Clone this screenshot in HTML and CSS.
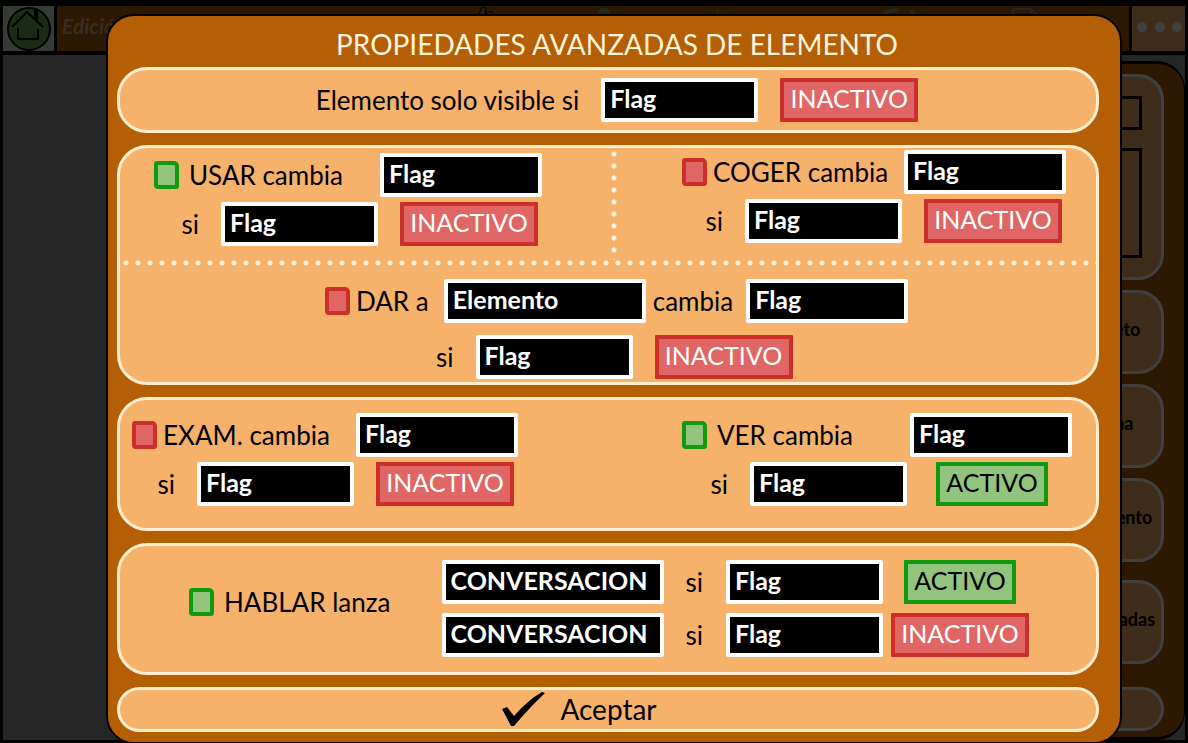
FILE: index.html
```html
<!DOCTYPE html>
<html lang="es">
<head>
  <meta charset="utf-8">
  <title>Propiedades avanzadas de elemento</title>
  <link rel="stylesheet" href="styles.css">
</head>
<body>
  <div class="app">
    <header class="topbar">
      <button class="home" aria-label="Inicio">
        <svg width="44" height="44" viewBox="0 0 44 44" fill="none" stroke="#000" stroke-width="2">
          <circle cx="22" cy="22" r="21" fill="#70ac58"/>
          <path d="M5 20 L20 5 L36 20 M28 12 V4 H30 V14 M11 21 V32 H31 V22"/>
        </svg>
      </button>
      <h2>Edición</h2>
      <nav class="tools">
        <svg width="26" height="26" viewBox="0 0 26 26" fill="#888" stroke="#000"><path d="M5 24 V8 L8 1 L12 2 L11 8 L17 5 L19 10 V24 Z"/></svg>
        <svg width="26" height="26" viewBox="0 0 26 26" fill="#999"><circle cx="13" cy="9" r="7"/><path d="M2 26 Q13 12 24 26 Z"/></svg>
        <svg width="80" height="26" viewBox="0 0 80 26" fill="none" stroke="#888" stroke-width="2"><path d="M0 6 L4 20 M10 3 L6 20 M20 6 L8 20"/></svg>
        <svg width="40" height="26" viewBox="0 0 40 26" fill="none" stroke="#999" stroke-width="4"><path d="M2 12 Q6 4 20 4 M32 5 L36 9"/></svg>
        <svg width="30" height="26" viewBox="0 0 30 26" fill="none" stroke="#999" stroke-width="2"><path d="M3 24 V3 H21 L27 9 V24 Z M21 3 V9"/></svg>
      </nav>
      <button class="more" aria-label="Más opciones"><i></i><i></i><i></i></button>
    </header>
    <aside class="sidebar">
      <div class="card card-form">
        <input type="text" aria-label="Nombre">
        <textarea aria-label="Descripción"></textarea>
      </div>
      <button class="card">Nuevo objeto</button>
      <button class="card">Añadir zona</button>
      <button class="card">Nuevo elemento</button>
      <button class="card card-rules">Reglas avanzadas</button>
      <button class="card card-last" aria-label="Cerrar"></button>
    </aside>
  </div>

  <div class="overlay">
    <form class="dialog" role="dialog" aria-labelledby="title">
      <h1 id="title">PROPIEDADES AVANZADAS DE ELEMENTO</h1>

      <section class="panel visible">
        <label for="visible">Elemento solo visible si</label>
        <input class="field" id="visible" type="text" value="Flag">
        <button type="button" class="toggle">INACTIVO</button>
      </section>

      <section class="panel verbs">
        <div class="cell cell-usar">
          <div class="action">
            <div class="row change">
              <label class="wide"><input type="checkbox" checked>USAR cambia</label>
              <input class="field target" type="text" value="Flag" aria-label="Flag que cambia USAR">
            </div>
            <div class="row cond">
              <label for="usar">si</label>
              <input class="field" id="usar" type="text" value="Flag">
              <button type="button" class="toggle">INACTIVO</button>
            </div>
          </div>
        </div>
        <div class="cell cell-coger">
          <div class="action">
            <div class="row change">
              <label><input type="checkbox">COGER cambia</label>
              <input class="field target" type="text" value="Flag" aria-label="Flag que cambia COGER">
            </div>
            <div class="row cond">
              <label for="coger">si</label>
              <input class="field" id="coger" type="text" value="Flag">
              <button type="button" class="toggle">INACTIVO</button>
            </div>
          </div>
        </div>
        <div class="cell cell-dar">
          <div class="row give">
            <label><input type="checkbox">DAR a</label>
            <input class="field element" type="text" value="Elemento" aria-label="Elemento">
            <label for="dar-flag">cambia</label>
            <input class="field target" id="dar-flag" type="text" value="Flag">
          </div>
          <div class="row give-cond">
            <label for="dar">si</label>
            <input class="field" id="dar" type="text" value="Flag">
            <button type="button" class="toggle">INACTIVO</button>
          </div>
        </div>
      </section>

      <section class="panel looks">
        <div class="action">
          <div class="row change">
            <label><input type="checkbox">EXAM. cambia</label>
            <input class="field target" type="text" value="Flag" aria-label="Flag que cambia EXAM.">
          </div>
          <div class="row cond">
            <label for="exam">si</label>
            <input class="field" id="exam" type="text" value="Flag">
            <button type="button" class="toggle">INACTIVO</button>
          </div>
        </div>
        <div class="action">
          <div class="row change">
            <label class="wide"><input type="checkbox" checked>VER cambia</label>
            <input class="field target" type="text" value="Flag" aria-label="Flag que cambia VER">
          </div>
          <div class="row cond cond-on">
            <label for="ver">si</label>
            <input class="field" id="ver" type="text" value="Flag">
            <button type="button" class="toggle on">ACTIVO</button>
          </div>
        </div>
      </section>

      <section class="panel talk">
        <label class="wide"><input type="checkbox" checked>HABLAR lanza</label>
        <div class="talks">
          <input class="field conversation" type="text" value="CONVERSACION" aria-label="Primera conversación">
          <label for="talk-1">si</label>
          <input class="field" id="talk-1" type="text" value="Flag">
          <button type="button" class="toggle on">ACTIVO</button>
          <input class="field conversation" type="text" value="CONVERSACION" aria-label="Segunda conversación">
          <label for="talk-2">si</label>
          <input class="field" id="talk-2" type="text" value="Flag">
          <button type="button" class="toggle">INACTIVO</button>
        </div>
      </section>

      <button type="submit" class="panel accept">
        <svg width="44" height="36" viewBox="0 0 44 36"><path d="M0 18 L5 16 L12 25 Q26 9 40 1 L43 2 Q28 16 12 35 L9 35 Z"/></svg>
        Aceptar
      </button>
    </form>
  </div>
</body>
</html>
```

FILE: styles.css
```css
* {
  box-sizing: border-box;
}
body {
  margin: 0;
  background: #999;
  font-family: Lato, sans-serif;
  font-size: 26px;
  line-height: 28px;
  color: #000;
  overflow: hidden;
}
button, input, textarea {
  font: inherit;
  color: inherit;
  margin: 0;
}

/* editor behind the dialog */
.app {
  display: flex;
  flex-direction: column;
  height: 100vh;
  border: 3px solid #000;
  border-top-width: 6px;
}
.topbar {
  display: flex;
  align-items: stretch;
  height: 49px;
  flex: none;
  background: #b45f06;
  border-bottom: 4px solid #000;
}
.home {
  width: 54px;
  padding: 0;
  border: 0;
  border-right: 3px solid #000;
  background: #d9ead3;
}
.home svg {
  display: block;
  margin: auto;
}
.topbar h2 {
  width: 80px;
  margin: 0;
  padding: 6px 5px;
  font-size: 21px;
  font-style: italic;
  color: #d8b48c;
}
.tools {
  flex: 1;
  display: flex;
  justify-content: space-between;
  padding: 0 89px 0 337px;
}
.more {
  display: flex;
  align-items: center;
  justify-content: space-between;
  width: 56px;
  padding: 0 3px 4px 5px;
  border: 0;
  border-left: 3px solid #000;
  background: #f6b26b;
}
.more i {
  width: 10px;
  height: 10px;
  border-radius: 50%;
  background: #fff;
}
.sidebar {
  flex: 1;
  align-self: flex-end;
  display: flex;
  flex-direction: column;
  width: 200px;
  margin-top: 6px;
  padding: 10px 20px 6px;
  background: #b45f06;
  border: 3px solid #000;
  border-right-width: 1px;
  border-radius: 28px;
}
.card {
  height: 84px;
  margin-bottom: 10px;
  padding: 0 0 6px;
  background: #f6b26b;
  border: 3px solid #fff;
  border-radius: 26px;
  font-size: 18px;
  font-weight: bold;
  white-space: nowrap;
}
.card-form {
  display: flex;
  flex-direction: column;
  gap: 18px;
  height: 206px;
  padding: 19px;
}
.card-form input, .card-form textarea {
  width: 100%;
  height: 34px;
  background: none;
  border: 3px solid #000;
  resize: none;
}
.card-form textarea {
  height: 112px;
}
.card-rules {
  margin-top: 8px;
}
.card-last {
  height: 44px;
  margin: auto 0 0;
}

.overlay {
  position: fixed;
  inset: 0;
  padding: 14px 66px 0 106px;
  background: rgba(0, 0, 0, 0.75);
}
.dialog {
  display: flex;
  flex-direction: column;
  gap: 12px;
  padding: 0 21px 10px 9px;
  background: #b45f06;
  border: 2px solid #000;
  border-radius: 28px;
}
h1 {
  margin: 13px 0 -4px;
  padding-left: 18px;
  font-size: 28px;
  line-height: 30px;
  font-weight: normal;
  text-align: center;
  color: #fff3dc;
}
.panel {
  background: #f6b26b;
  border: 3px solid #ffedcc;
  border-radius: 30px;
}

label {
  display: flex;
  align-items: center;
  gap: 6px;
  white-space: nowrap;
}
.wide {
  gap: 10px;
}
.field {
  width: 157px;
  height: 44px;
  padding: 0 5px 4px;
  background: #000;
  border: 4px solid #fff;
  border-radius: 2px;
  font-size: 25px;
  font-weight: bold;
  color: #fff;
}
.target {
  width: 162px;
}
.element {
  width: 202px;
}
.conversation {
  width: 222px;
}
.toggle {
  width: 138px;
  height: 44px;
  padding: 0 0 4px;
  background: #e06666;
  border: 4px solid #cc2e2a;
  border-radius: 1px;
  font-size: 25px;
  color: #fff;
}
.toggle.on {
  width: 112px;
  background: #93c47d;
  border-color: #109a10;
  color: #000;
}
input[type="checkbox"] {
  appearance: none;
  width: 25px;
  height: 28px;
  background: #e06666;
  border: 4px solid #cc2e2a;
  border-radius: 3px 5px 3px 4px;
}
input[type="checkbox"]:checked {
  background: #93c47d;
  border-color: #109a10;
}

.visible {
  display: flex;
  align-items: center;
  justify-content: center;
  gap: 22px;
  height: 66px;
  padding-left: 18px;
}

.row {
  display: flex;
  align-items: center;
}
.action {
  display: flex;
  flex-direction: column;
  gap: 5px;
  width: 388px;
}
.change {
  justify-content: space-between;
}
.cond {
  justify-content: flex-end;
  gap: 22px;
  padding-right: 4px;
}
.cond-on {
  padding-right: 24px;
}
.cond-on .toggle {
  margin-left: 7px;
}

.verbs {
  display: grid;
  grid-template-columns: 497fr 479fr;
  grid-template-rows: 112px 122px;
}
.cell {
  --dot: radial-gradient(circle, #fff3dc 2px, transparent 3px);
}
.cell-usar {
  padding: 5px 0 0 34px;
  background: var(--dot) right top / 6px 12px repeat-y;
}
.cell-coger {
  padding: 2px 0 0 65px;
}
.cell-coger .action {
  width: 384px;
}
.cell-dar {
  grid-column: 1 / -1;
  display: flex;
  flex-direction: column;
  gap: 12px;
  padding: 19px 0 0 205px;
  background: var(--dot) left top / 12px 6px repeat-x;
}
.give .element {
  margin: 0 7px 0 15px;
}
.give .target {
  margin-left: 13px;
}
.give-cond {
  gap: 22px;
  padding-left: 111px;
}

.looks {
  display: flex;
  justify-content: space-between;
  height: 134px;
  padding: 13px 24px 0 12px;
}
.looks .action {
  width: 386px;
}
.looks .action:last-child {
  width: 390px;
}

.talk {
  display: flex;
  align-items: center;
  justify-content: space-between;
  height: 132px;
  padding: 0 67px 2px 69px;
}
.talk .wide {
  padding-bottom: 12px;
}
.talks {
  display: grid;
  grid-template-columns: auto auto auto 138px;
  align-items: center;
  justify-items: center;
  gap: 9px 8px;
}
.talks label {
  padding: 0 15px 0 14px;
}

.accept {
  display: flex;
  align-items: center;
  justify-content: center;
  gap: 14px;
  height: 45px;
  padding: 0 57px 2px 0;
  font-size: 28px;
}
```
